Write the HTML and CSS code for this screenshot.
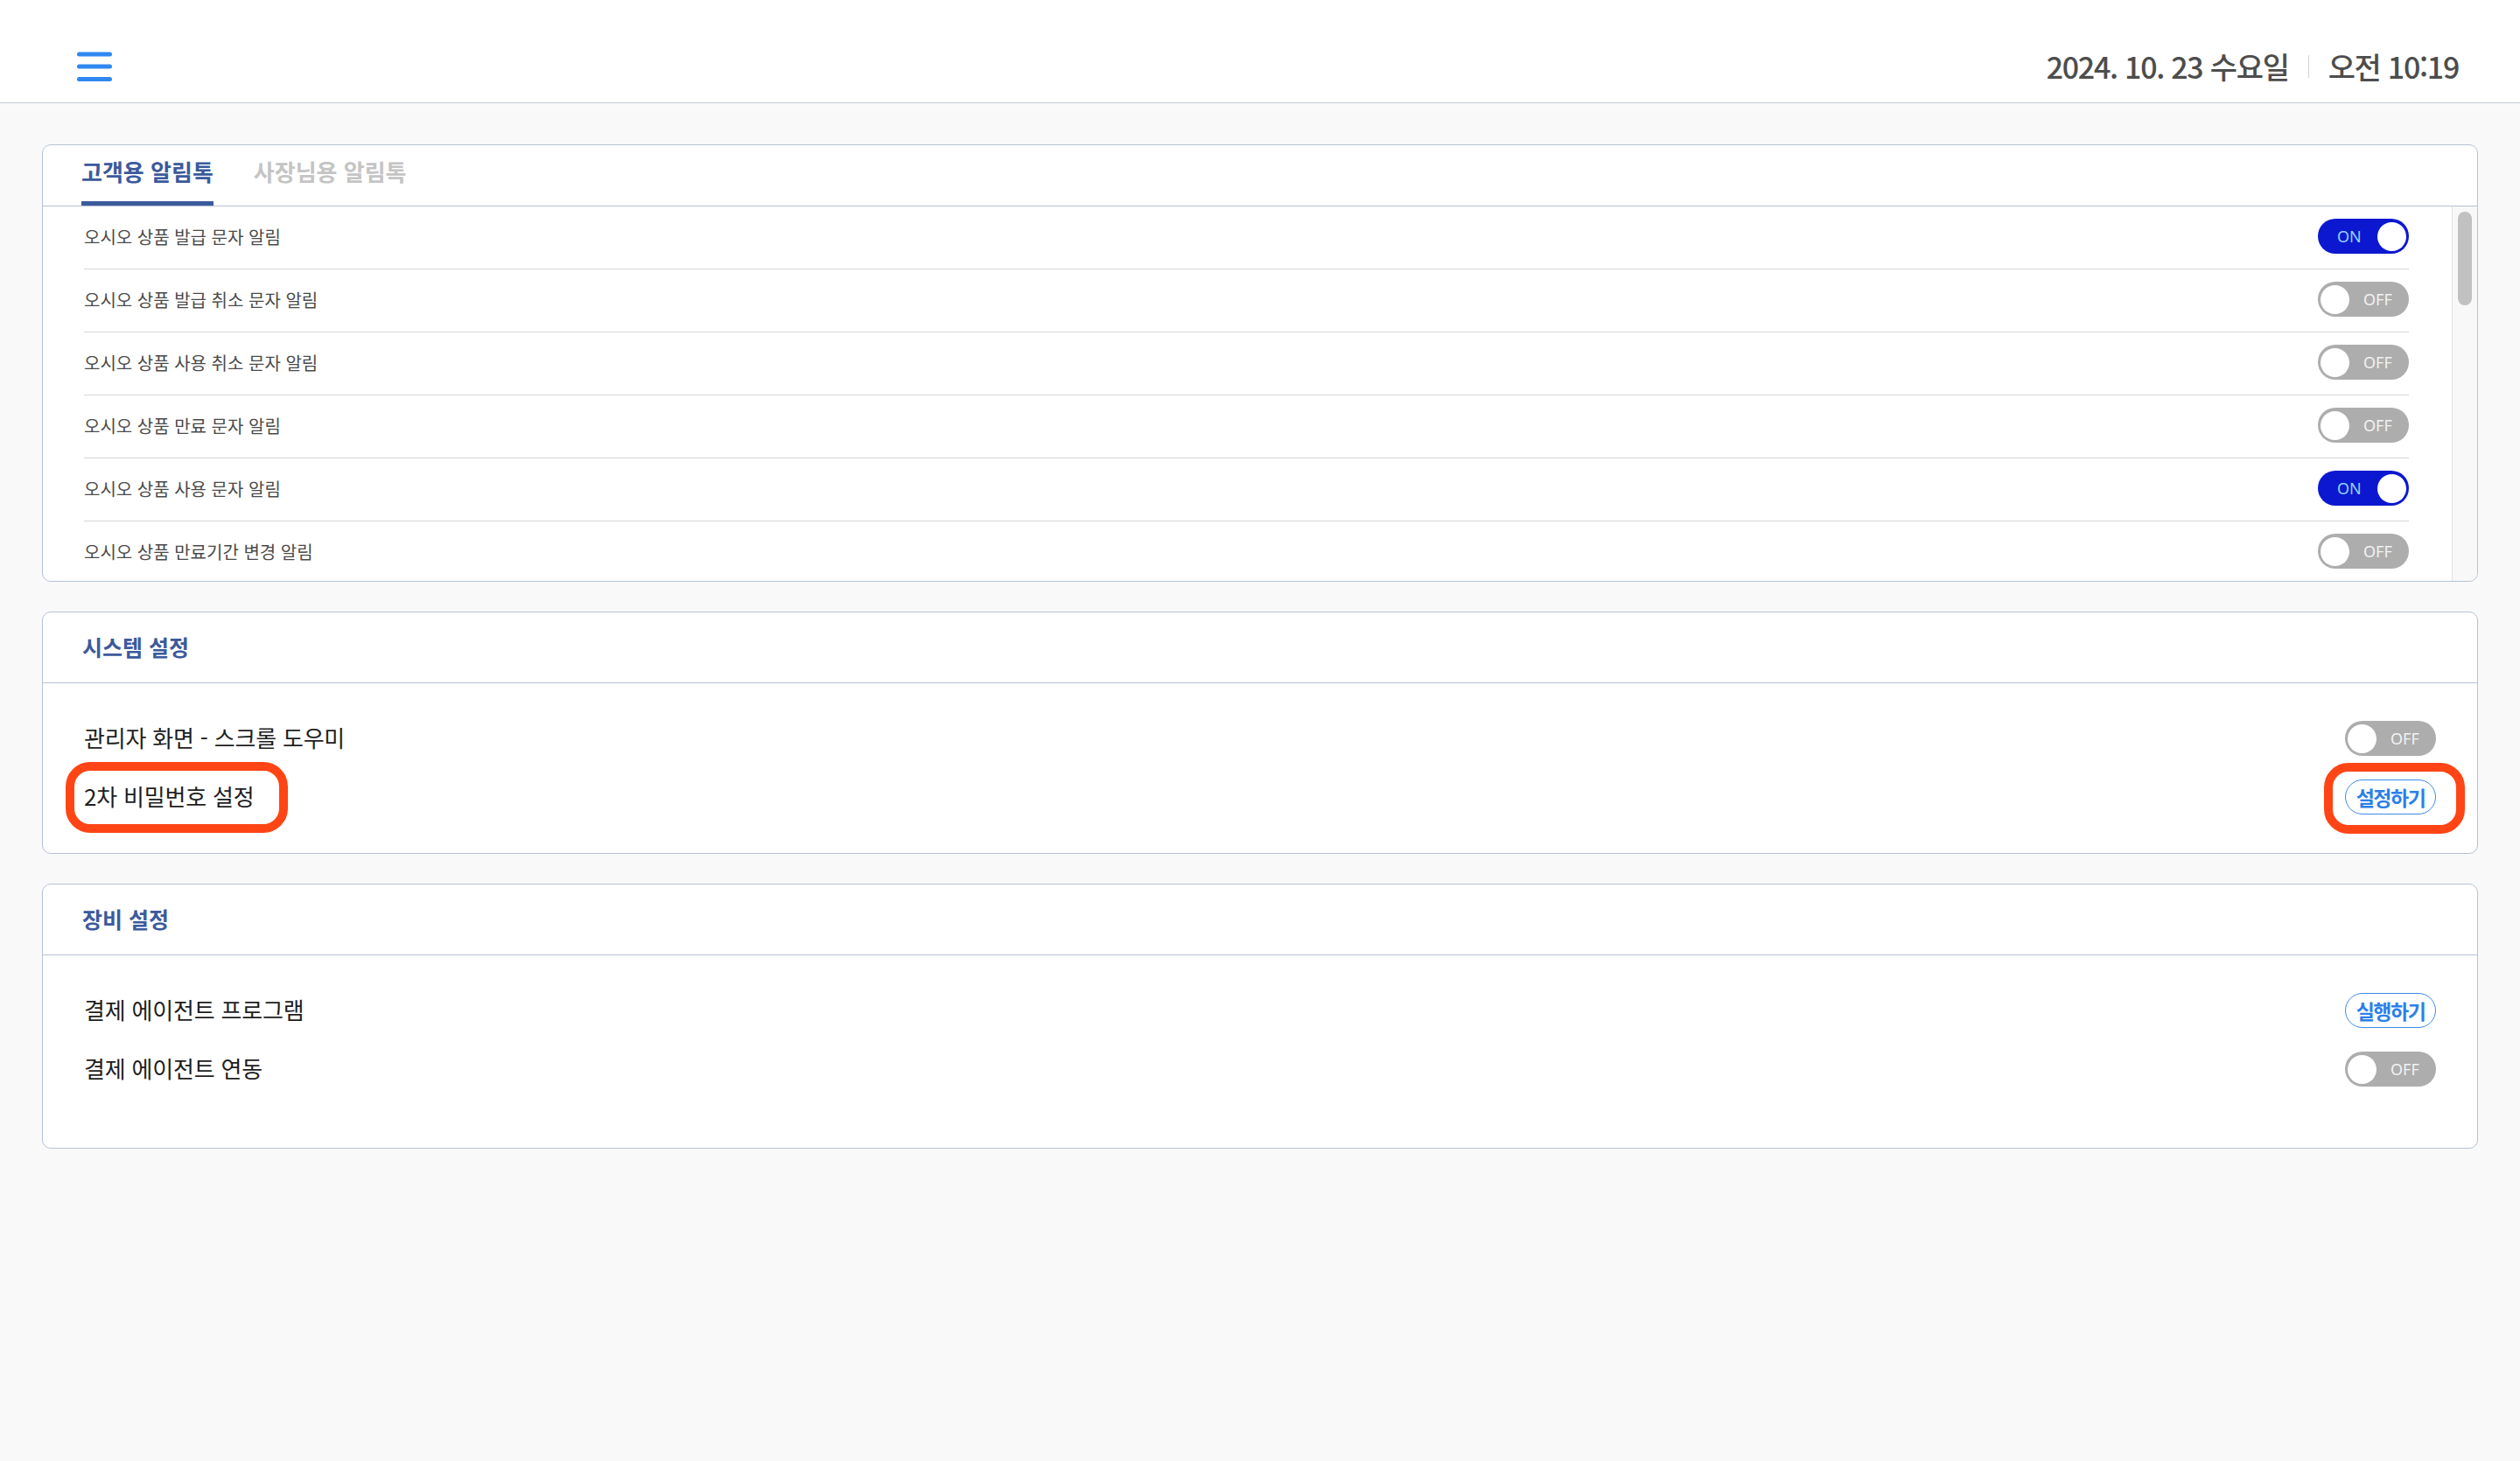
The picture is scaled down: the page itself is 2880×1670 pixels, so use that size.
FILE: index.html
```html
<!DOCTYPE html>
<html lang="ko">
  <head>
    <meta charset="UTF-8">
    <meta name="viewport" content="width=device-width, initial-scale=1.0">
    <title>설정</title>

    <link rel="stylesheet" href="styles.css">
  </head>

  <body>
    <header class="topbar">
      <button class="menu-btn" aria-label="메뉴">
        <svg width="40" height="36" viewBox="0 0 40 36">
          <path d="M2.5 4H37.5M2.5 18H37.5M2.5 32.5H37.5" stroke="#2f88f0" stroke-width="5" stroke-linecap="round" fill="none"/>
        </svg>
      </button>
      <div class="clock">
        <span>2024. 10. 23 수요일</span>
        <span class="clock-divider"></span>
        <span>오전 10:19</span>
      </div>
    </header>

    <main class="content">
      <section class="card">
        <div class="tabs">
          <button class="tab active">고객용 알림톡</button>
          <button class="tab">사장님용 알림톡</button>
        </div>

        <div class="alim-wrap">
          <ul class="alim-list">
            <li class="alim-item">
              <span>오시오 상품 발급 문자 알림</span>
              <span class="toggle on"><span class="toggle-text">ON</span><span class="knob"></span></span>
            </li>
            <li class="alim-item">
              <span>오시오 상품 발급 취소 문자 알림</span>
              <span class="toggle"><span class="knob"></span><span class="toggle-text">OFF</span></span>
            </li>
            <li class="alim-item">
              <span>오시오 상품 사용 취소 문자 알림</span>
              <span class="toggle"><span class="knob"></span><span class="toggle-text">OFF</span></span>
            </li>
            <li class="alim-item">
              <span>오시오 상품 만료 문자 알림</span>
              <span class="toggle"><span class="knob"></span><span class="toggle-text">OFF</span></span>
            </li>
            <li class="alim-item">
              <span>오시오 상품 사용 문자 알림</span>
              <span class="toggle on"><span class="toggle-text">ON</span><span class="knob"></span></span>
            </li>
            <li class="alim-item">
              <span>오시오 상품 만료기간 변경 알림</span>
              <span class="toggle"><span class="knob"></span><span class="toggle-text">OFF</span></span>
            </li>
          </ul>
          <div class="scroll-track"><div class="scroll-thumb"></div></div>
        </div>
      </section>

      <section class="card">
        <h2 class="card-title">시스템 설정</h2>
        <div class="setting-list">
          <div class="setting-row">
            <span class="setting-label">관리자 화면 - 스크롤 도우미</span>
            <span class="toggle"><span class="knob"></span><span class="toggle-text">OFF</span></span>
          </div>
          <div class="setting-row">
            <span class="setting-label mark mark-left">2차 비밀번호 설정</span>
            <span class="mark mark-right"><button class="pill-btn">설정하기</button></span>
          </div>
        </div>
      </section>

      <section class="card">
        <h2 class="card-title">장비 설정</h2>
        <div class="setting-list setting-list-tall">
          <div class="setting-row">
            <span class="setting-label">결제 에이전트 프로그램</span>
            <button class="pill-btn">실행하기</button>
          </div>
          <div class="setting-row">
            <span class="setting-label">결제 에이전트 연동</span>
            <span class="toggle"><span class="knob"></span><span class="toggle-text">OFF</span></span>
          </div>
        </div>
      </section>
    </main>
  </body>
</html>
```

FILE: styles.css
```css
*, *::before, *::after {
  box-sizing: border-box;
}

body {
  margin: 0;
  font-family: "Noto Sans CJK KR", "Noto Sans", sans-serif;
  background-color: #f9f9fa;
  color: #222;
}

button {
  font-family: inherit;
  border: none;
  background: none;
  padding: 0;
  cursor: pointer;
}

/* top bar */
.topbar {
  height: 118px;
  padding: 34px 70px 0 88px;
  display: flex;
  justify-content: space-between;
  align-items: center;
  background-color: #fff;
  border-bottom: 1px solid #c6ccd8;
}

.menu-btn {
  display: flex;
}

.clock {
  display: flex;
  align-items: center;
  font-size: 34px;
  font-weight: 500;
  letter-spacing: -1.3px;
  color: #4d4d4d;
}

.clock-divider {
  width: 1px;
  height: 26px;
  margin: 0 22px;
  background-color: #d2d2d2;
}

/* cards */
.content {
  padding: 47px 48px;
  display: flex;
  flex-direction: column;
  gap: 34px;
}

.card {
  background-color: #fff;
  border: 1px solid #b6c2d4;
  border-radius: 10px;
}

.card-title {
  margin: 0;
  height: 81px;
  padding: 0 45px 3px;
  display: flex;
  align-items: center;
  font-size: 25px;
  font-weight: 700;
  color: #3b5a9c;
  border-bottom: 1px solid #b6c2d4;
}

/* tabs */
.tabs {
  height: 70px;
  padding: 0 44px;
  display: flex;
  gap: 46px;
  border-bottom: 1px solid #b6c2d4;
}

.tab {
  height: 69px;
  padding-bottom: 5px;
  font-size: 26px;
  font-weight: 700;
  color: #c4c4c4;
  border-bottom: 5px solid transparent;
}

.tab.active {
  color: #3b5a9c;
  border-bottom-color: #3b5a9c;
}

/* alim list */
.alim-wrap {
  height: 428px;
  display: flex;
  overflow: hidden;
  border-radius: 0 0 10px 10px;
}

.alim-list {
  flex: 1;
  margin: 0 49px 0 47px;
  padding: 0;
  list-style: none;
}

.alim-item {
  height: 72px;
  padding-bottom: 3px;
  display: flex;
  justify-content: space-between;
  align-items: center;
  font-size: 20px;
  color: #4b4b4b;
  border-bottom: 1px solid #d3d6db;
}

.scroll-track {
  width: 29px;
  padding: 6px 5px 0 6px;
  background-color: #f8f8f8;
  border-left: 1px solid #e3e3e3;
}

.scroll-thumb {
  width: 16px;
  height: 107px;
  border-radius: 8px;
  background-color: #c1c1c1;
}

/* toggle */
.toggle {
  width: 104px;
  height: 40px;
  padding: 0 3px;
  flex-shrink: 0;
  display: flex;
  align-items: center;
  border-radius: 20px;
  background-color: #adadad;
  font-family: "Noto Sans", sans-serif;
  font-size: 18px;
}

.toggle .knob {
  width: 33px;
  height: 33px;
  border-radius: 50%;
  background-color: #fff;
}

.toggle-text {
  margin-left: 16px;
  color: #f2f2f2;
}

.toggle.on {
  background-color: #0c18cf;
}

.toggle.on .toggle-text {
  margin-left: 19px;
  color: #93d3ff;
}

.toggle.on .knob {
  margin-left: auto;
}

/* settings */
.setting-list {
  padding: 43px 47px 44px;
  display: flex;
  flex-direction: column;
  gap: 27px;
}

.setting-list-tall {
  padding-bottom: 70px;
}

.setting-row {
  height: 40px;
  display: flex;
  justify-content: space-between;
  align-items: center;
}

.setting-label {
  font-size: 26px;
  letter-spacing: -0.2px;
  line-height: 40px;
  padding-bottom: 3px;
  color: #1e1e1e;
}

.pill-btn {
  width: 104px;
  height: 40px;
  border: 1px solid #3d8ae6;
  border-radius: 20px;
  font-size: 23px;
  font-weight: 700;
  letter-spacing: -1.5px;
  color: #2b80e8;
}

/* red highlight marks */
.mark {
  position: relative;
  display: flex;
}

.mark::after {
  content: "";
  position: absolute;
  top: -19px;
  height: 81px;
  border: 10px solid #ff4516;
  border-radius: 28px;
}

.mark-left::after {
  left: -21px;
  width: 254px;
}

.mark-right::after {
  left: -24px;
  width: 161px;
}
```
